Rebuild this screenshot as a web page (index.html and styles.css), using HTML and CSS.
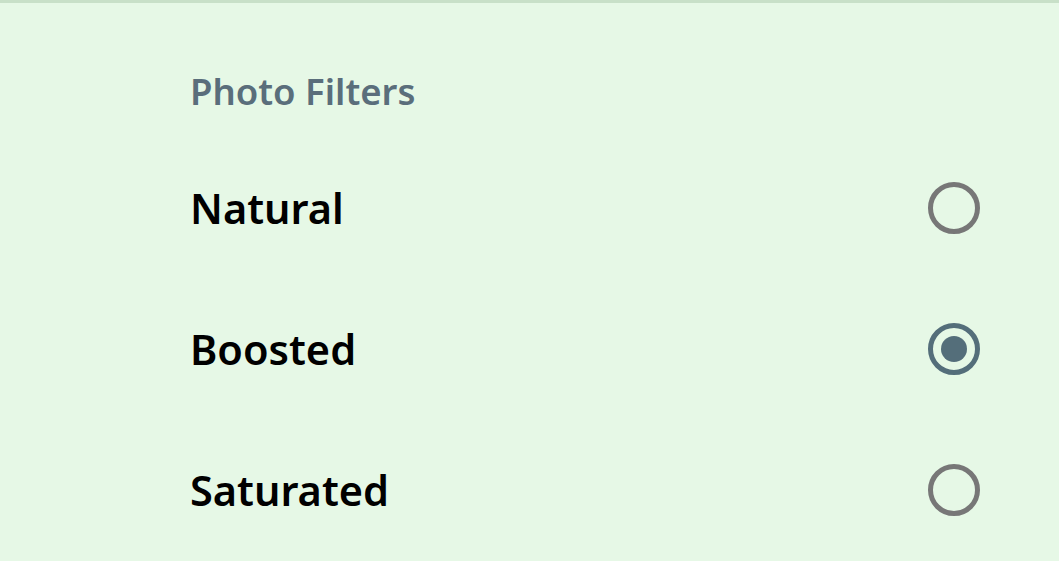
FILE: index.html
```html
<!DOCTYPE html>
<html>
<head>
<meta charset="utf-8">
<link rel="stylesheet" href="styles.css">
</head>
<body>
<div class="screen">
  <div class="title">Photo Filters</div>
  <div class="list">
    <div class="row"><span class="label">Natural</span><span class="radio"></span></div>
    <div class="row"><span class="label">Boosted</span><span class="radio checked"></span></div>
    <div class="row"><span class="label">Saturated</span><span class="radio"></span></div>
  </div>
</div>
</body>
</html>
```

FILE: styles.css
```css
html, body {
  margin: 0;
  padding: 0;
}
body {
  background: #e6f8e6;
  font-family: "Noto Sans", "Open Sans", sans-serif;
  width: 1059px;
  height: 561px;
  overflow: hidden;
}
.screen {
  border-top: 3px solid #c8e0c8;
  padding: 0 79px 0 190px;
}
.title {
  font-size: 36.5px;
  font-weight: 600;
  color: #5a6e7b;
  height: 60px;
  line-height: 60px;
  margin-top: 58px;
}
.list {
  display: flex;
  flex-direction: column;
}
.row {
  display: flex;
  align-items: center;
  justify-content: space-between;
  height: 141px;
}
.row:first-child {
  margin-top: 16px;
}
.label {
  font-size: 41.5px;
  font-weight: 600;
  color: #000;
}
.radio {
  box-sizing: border-box;
  width: 52px;
  height: 52px;
  border: 5px solid #777777;
  border-radius: 50%;
  display: flex;
  align-items: center;
  justify-content: center;
}
.radio.checked {
  border-color: #546e7a;
}
.radio.checked::after {
  content: "";
  width: 26px;
  height: 26px;
  border-radius: 50%;
  background: #546e7a;
}
```
